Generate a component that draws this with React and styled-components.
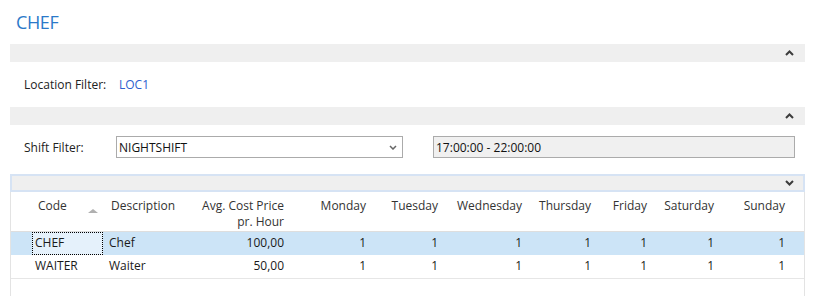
import React from 'react'
import styled, { createGlobalStyle } from 'styled-components'

const GlobalStyle = createGlobalStyle`
  body {
    margin: 0;
    background: #fff;
    font-family: "Open Sans", "Noto Sans", sans-serif;
    font-size: 12px;
    color: #222;
  }
`

const Page = styled.div`
  width: 815px;
  height: 296px;
  overflow: hidden;
  padding: 0 10px;
  box-sizing: border-box;
`

const Title = styled.h1`
  margin: 0;
  padding: 10px 0 0 6px;
  height: 44px;
  box-sizing: border-box;
  font-size: 18px;
  line-height: 24px;
  font-weight: 400;
  color: #2b79c9;
  letter-spacing: -0.4px;
`

const SectionBar = styled.div`
  height: 18px;
  box-sizing: border-box;
  background: #efefef;
  border: ${p => (p.$framed ? '2px solid #d6e3f4' : 'none')};
  display: flex;
  align-items: center;
  justify-content: flex-end;
  padding-right: ${p => (p.$framed ? 9 : 11)}px;
`

const Chevron = ({ up }) => (
  <svg width="9" height="6" viewBox="0 0 9 6">
    <polyline
      points={up ? '1,5 4.5,1.5 8,5' : '1,1 4.5,4.5 8,1'}
      fill="none"
      stroke="#3c3c3c"
      strokeWidth="2"
    />
  </svg>
)

const FieldRow = styled.div`
  display: flex;
  align-items: center;
  height: ${p => p.$h}px;
  padding-left: 14px;
`

const Label = styled.span`
  width: ${p => p.$w}px;
  flex: none;
`

const LinkValue = styled.span`
  color: #2d5fcf;
`

const Select = styled.div`
  width: 287px;
  height: 22px;
  box-sizing: border-box;
  border: 1px solid #ababab;
  display: flex;
  align-items: center;
  justify-content: space-between;
  padding: 0 5px 0 2px;
  color: #111;
`

const ReadOnlyBox = styled.div`
  margin-left: 30px;
  width: 362px;
  height: 22px;
  box-sizing: border-box;
  border: 1px solid #ababab;
  background: #f0f0f0;
  display: flex;
  align-items: center;
  padding-left: 2px;
  color: #111;
`

const Spacer = styled.div`
  height: ${p => p.$h}px;
`

const Table = styled.div`
  border-left: 1px solid #e3e3e3;
  border-right: 1px solid #e3e3e3;
  height: 110px;
`

const cols = '21px 71px 82px 103px 82px 72px 84px 69px 56px 67px 71px 1fr'

const HeadRow = styled.div`
  display: grid;
  grid-template-columns: ${cols};
  height: 40px;
  border-bottom: 1px solid #dedede;
  box-sizing: border-box;
  padding-top: 6px;
  line-height: 16px;
  color: #333;
`

const HeadCell = styled.div`
  text-align: ${p => (p.$right ? 'right' : 'left')};
  padding: ${p => (p.$right ? '0 4px 0 0' : '0 0 0 ' + (p.$pl || 6) + 'px')};
  display: ${p => (p.$sort ? 'flex' : 'block')};
  align-items: flex-start;
`

const HeadLine = styled.div`
  height: 16px;
  white-space: nowrap;
`

const SortArrow = styled.span`
  margin: 11px 0 0 21px;
  width: 0;
  height: 0;
  border-left: 5px solid transparent;
  border-right: 5px solid transparent;
  border-bottom: 4px solid #b0b0b0;
`

const Row = styled.div`
  display: grid;
  grid-template-columns: ${cols};
  height: 23px;
  line-height: 21px;
  background: ${p => (p.$selected ? '#cce4f7' : '#fff')};
  border-bottom: ${p => (p.$last ? '1px solid #e6e6e6' : 'none')};
`

const Cell = styled.div`
  text-align: ${p => (p.$right ? 'right' : 'left')};
  padding: ${p => (p.$right ? '0 4px 0 0' : '0 0 0 ' + (p.$pl || 3) + 'px')};
  color: #1a1a1a;
  box-sizing: border-box;
  white-space: nowrap;
`

const FocusCell = styled(Cell)`
  background: #e5f1fb;
  outline: 1px dotted #000;
  outline-offset: -1px;
  padding-left: 3px;
`

const days = ['Monday', 'Tuesday', 'Wednesday', 'Thursday', 'Friday', 'Saturday', 'Sunday']

const rows = [
  { code: 'CHEF', desc: 'Chef', cost: '100,00', selected: true },
  { code: 'WAITER', desc: 'Waiter', cost: '50,00', last: true }
]

const App = () => (
  <Page>
    <GlobalStyle />
    <Title>CHEF</Title>
    <SectionBar>
      <Chevron up />
    </SectionBar>
    <FieldRow $h={45}>
      <Label $w={95}>Location Filter:</Label>
      <LinkValue>LOC1</LinkValue>
    </FieldRow>
    <SectionBar>
      <Chevron up />
    </SectionBar>
    <Spacer $h={11} />
    <FieldRow $h={22}>
      <Label $w={92}>Shift Filter:</Label>
      <Select>
        <span>NIGHTSHIFT</span>
        <svg width="8" height="5" viewBox="0 0 8 5">
          <polyline points="1,1 4,4 7,1" fill="none" stroke="#666" strokeWidth="1.5" />
        </svg>
      </Select>
      <ReadOnlyBox>17:00:00 - 22:00:00</ReadOnlyBox>
    </FieldRow>
    <Spacer $h={16} />
    <SectionBar $framed>
      <Chevron />
    </SectionBar>
    <Table>
      <HeadRow>
        <HeadCell />
        <HeadCell $sort $pl={6}>
          Code
          <SortArrow />
        </HeadCell>
        <HeadCell $pl={8}>Description</HeadCell>
        <HeadCell $right>
          <HeadLine>Avg. Cost Price</HeadLine>
          <HeadLine>pr. Hour</HeadLine>
        </HeadCell>
        {days.map(d => (
          <HeadCell key={d} $right>
            {d}
          </HeadCell>
        ))}
        <HeadCell />
      </HeadRow>
      {rows.map(r => (
        <Row key={r.code} $selected={r.selected} $last={r.last}>
          <Cell />
          {r.selected ? <FocusCell>{r.code}</FocusCell> : <Cell>{r.code}</Cell>}
          <Cell $pl={6}>{r.desc}</Cell>
          <Cell $right>{r.cost}</Cell>
          {days.map(d => (
            <Cell key={d} $right>
              1
            </Cell>
          ))}
          <Cell />
        </Row>
      ))}
    </Table>
  </Page>
)

export default App
